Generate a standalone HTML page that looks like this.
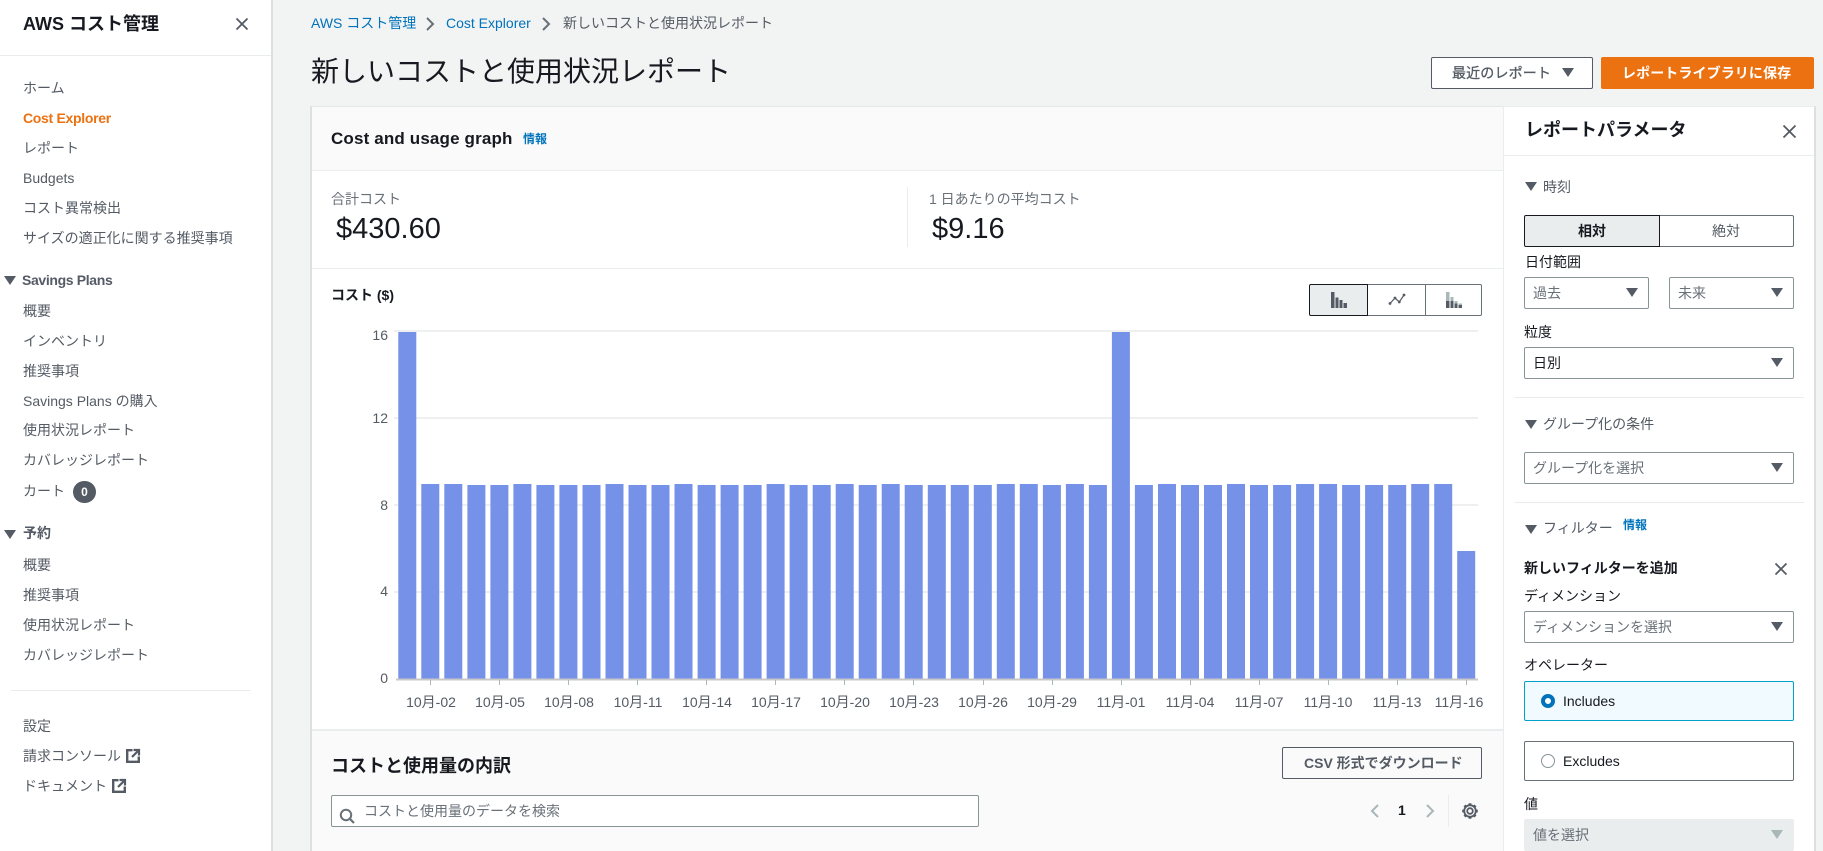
<!DOCTYPE html>
<html lang="ja"><head><meta charset="utf-8"><title>AWS コスト管理</title>
<style>
html,body{margin:0;padding:0;width:1823px;height:851px;overflow:hidden;background:#f2f3f3}
body{position:relative;font-family:"Liberation Sans","Noto Sans CJK JP",sans-serif;font-size:14px;color:#16191f}
.t{position:absolute;line-height:20px;white-space:nowrap}
.n{color:#545b64}.b{font-weight:700}.l{color:#0073bb}.g{color:#687078}
.box{position:absolute;box-sizing:border-box}
.sel{position:absolute;box-sizing:border-box;background:#fff;border:1px solid #879596;border-radius:2px;height:32px}
.tri{position:absolute;width:0;height:0;border-left:6px solid transparent;border-right:6px solid transparent;border-top:9px solid #545b64}
.hr{position:absolute;height:1px;background:#eaeded}
svg{position:absolute;overflow:visible}
</style></head><body>

<!-- sidebar -->
<div class="box" style="left:0;top:0;width:273px;height:851px;background:#fff;border-right:2px solid #dce0e0"></div>
<div class="t b" style="left:23px;top:14px;font-size:18px">AWS コスト管理</div>
<svg style="left:236px;top:18px" width="12" height="12" viewBox="0 0 12 12"><path d="M.5.5l11 11M11.500.5l-11 11" stroke="#545b64" stroke-width="1.800" fill="none"/></svg>
<div class="hr" style="left:0;top:55px;width:271px"></div>
<div class="t n" style="left:23px;top:78px">ホーム</div>
<div class="t b" style="left:23px;top:108px;color:#ec7211;letter-spacing:-.3px">Cost Explorer</div>
<div class="t n" style="left:23px;top:138px">レポート</div>
<div class="t n" style="left:23px;top:168px">Budgets</div>
<div class="t n" style="left:23px;top:198px">コスト異常検出</div>
<div class="t n" style="left:23px;top:228px">サイズの適正化に関する推奨事項</div>
<div class="tri" style="left:4px;top:276px"></div>
<div class="t n b" style="left:22px;top:270px;letter-spacing:-.35px">Savings Plans</div>
<div class="t n" style="left:23px;top:301px">概要</div>
<div class="t n" style="left:23px;top:331px">インベントリ</div>
<div class="t n" style="left:23px;top:361px">推奨事項</div>
<div class="t n" style="left:23px;top:391px">Savings Plans の購入</div>
<div class="t n" style="left:23px;top:420px">使用状況レポート</div>
<div class="t n" style="left:23px;top:450px">カバレッジレポート</div>
<div class="t n" style="left:23px;top:481px">カート</div>
<div class="box" style="left:73px;top:481px;width:23px;height:22px;border-radius:11px;background:#545b64;color:#fff;text-align:center;font-size:12px;font-weight:700;line-height:22px">0</div>
<div class="tri" style="left:4px;top:530px"></div>
<div class="t n b" style="left:23px;top:523px">予約</div>
<div class="t n" style="left:23px;top:555px">概要</div>
<div class="t n" style="left:23px;top:585px">推奨事項</div>
<div class="t n" style="left:23px;top:615px">使用状況レポート</div>
<div class="t n" style="left:23px;top:645px">カバレッジレポート</div>
<div class="hr" style="left:11px;top:690px;width:240px"></div>
<div class="t n" style="left:23px;top:716px">設定</div>
<div class="t n" style="left:23px;top:746px">請求コンソール</div>
<svg style="left:126px;top:749px" width="14" height="14" viewBox="0 0 14 14"><path d="M6.500 1.200H1.200v11.600h11.600V7.500" stroke="#545b64" stroke-width="2.400" fill="none"/><path d="M7.500 1h5.500v5.500" stroke="#545b64" stroke-width="2.200" fill="none"/><path d="M12.500 1.500L6 8" stroke="#545b64" stroke-width="2.200" fill="none"/></svg>
<div class="t n" style="left:23px;top:776px">ドキュメント</div>
<svg style="left:112px;top:779px" width="14" height="14" viewBox="0 0 14 14"><path d="M6.500 1.200H1.200v11.600h11.600V7.500" stroke="#545b64" stroke-width="2.400" fill="none"/><path d="M7.500 1h5.500v5.500" stroke="#545b64" stroke-width="2.200" fill="none"/><path d="M12.500 1.500L6 8" stroke="#545b64" stroke-width="2.200" fill="none"/></svg>

<!-- header -->
<div class="t l" style="left:311px;top:13px">AWS コスト管理</div>
<svg style="left:426px;top:17px" width="9" height="14" viewBox="0 0 9 14"><path d="M1 1l6 6-6 6" stroke="#687078" stroke-width="2" fill="none"/></svg>
<div class="t l" style="left:446px;top:13px">Cost Explorer</div>
<svg style="left:542px;top:17px" width="9" height="14" viewBox="0 0 9 14"><path d="M1 1l6 6-6 6" stroke="#687078" stroke-width="2" fill="none"/></svg>
<div class="t n" style="left:563px;top:13px">新しいコストと使用状況レポート</div>
<div class="t" style="left:311px;top:52px;font-size:28px;line-height:40px">新しいコストと使用状況レポート</div>
<div class="box" style="left:1431px;top:57px;width:162px;height:32px;background:#fff;border:1px solid #545b64;border-radius:2px"></div>
<div class="t n" style="left:1452px;top:63px;-webkit-text-stroke:.3px #545b64;letter-spacing:.15px">最近のレポート</div>
<div class="tri" style="left:1562px;top:68px"></div>
<div class="box" style="left:1601px;top:57px;width:213px;height:32px;background:#ec7211;border-radius:2px"></div>
<div class="t b" style="left:1622px;top:63px;color:#fff;letter-spacing:.1px">レポートライブラリに保存</div>

<!-- main panel -->
<div class="box" style="left:310px;top:106px;width:1194px;height:745px;background:#fff;border-left:2px solid #dce0e0;border-top:1px solid #e4e7e7"></div>
<div class="box" style="left:312px;top:107px;width:1191px;height:64px;background:#fafafa;border-bottom:1px solid #eaeded"></div>
<div class="t b" style="left:331px;top:129px;font-size:17px;letter-spacing:.15px">Cost and usage graph</div>
<div class="t b l" style="left:523px;top:129px;font-size:12px">情報</div>
<div class="t g" style="left:331px;top:189px">合計コスト</div>
<div class="t" style="left:336px;top:209px;font-size:29px;line-height:40px">$430.60</div>
<div class="box" style="left:907px;top:187px;width:1px;height:60px;background:#eaeded"></div>
<div class="t g" style="left:929px;top:189px">1 日あたりの平均コスト</div>
<div class="t" style="left:932px;top:209px;font-size:29px;line-height:40px">$9.16</div>
<div class="hr" style="left:312px;top:268px;width:1191px"></div>
<div class="t b" style="left:331px;top:285px">コスト ($)</div>

<!-- chart toggle -->
<div class="box" style="left:1367px;top:284px;width:115px;height:32px;background:#fff;border:1px solid #687078;border-radius:0 2px 2px 0"></div>
<div class="box" style="left:1425px;top:284px;width:1px;height:32px;background:#687078"></div>
<div class="box" style="left:1309px;top:284px;width:59px;height:32px;background:#eaeded;border:1px solid #16191f;border-radius:2px 0 0 2px"></div>
<svg style="left:1331px;top:292px" width="16" height="16" viewBox="0 0 16 16" fill="#545b64"><rect x="0" y="0" width="3.500" height="16"/><rect x="4.500" y="5.500" width="3" height="10.500"/><rect x="8.500" y="8" width="3" height="8"/><rect x="12.500" y="11" width="3.500" height="5"/></svg>
<svg style="left:1389px;top:294px" width="16" height="11" viewBox="0 0 16 11"><path d="M1 9.500L6 4l4.300 4L15 1" stroke="#545b64" stroke-width="1.200" fill="none"/><g fill="#545b64"><circle cx="1" cy="9.500" r="1.400"/><circle cx="6" cy="4" r="1.400"/><circle cx="10.300" cy="8" r="1.400"/><circle cx="15" cy="1" r="1.400"/></g></svg>
<svg style="left:1446px;top:292px" width="16" height="16" viewBox="0 0 16 16"><g fill="#aab7b8"><rect x="0" y="0" width="3.500" height="9"/><rect x="4.500" y="5" width="3" height="4"/><rect x="8.500" y="9" width="3" height="2.500"/><rect x="12.500" y="11.500" width="3.500" height="1.500"/></g><g fill="#545b64"><rect x="0" y="9" width="3.500" height="7"/><rect x="4.500" y="9" width="3" height="7"/><rect x="8.500" y="11.500" width="3" height="4.500"/><rect x="12.500" y="13" width="3.500" height="3"/></g></svg>

<!-- chart -->
<svg style="left:0;top:0" width="1823" height="851" viewBox="0 0 1823 851">
<g fill="#eef0f0"><rect x="394" y="330" width="1084" height="2"/><rect x="394" y="417" width="1084" height="2"/><rect x="394" y="504" width="1084" height="2"/><rect x="394" y="591" width="1084" height="2"/></g>
<g fill="#7692e8">
<rect x="398.300" y="332" width="18" height="347"/><rect x="421.300" y="484" width="18" height="195"/><rect x="444.300" y="484" width="18" height="195"/><rect x="467.400" y="485" width="18" height="194"/><rect x="490.400" y="485" width="18" height="194"/><rect x="513.400" y="484" width="18" height="195"/><rect x="536.400" y="485" width="18" height="194"/><rect x="559.400" y="485" width="18" height="194"/><rect x="582.500" y="485" width="18" height="194"/><rect x="605.500" y="484" width="18" height="195"/><rect x="628.500" y="485" width="18" height="194"/><rect x="651.500" y="485" width="18" height="194"/><rect x="674.500" y="484" width="18" height="195"/><rect x="697.600" y="485" width="18" height="194"/><rect x="720.600" y="485" width="18" height="194"/><rect x="743.600" y="485" width="18" height="194"/><rect x="766.600" y="484" width="18" height="195"/><rect x="789.600" y="485" width="18" height="194"/><rect x="812.700" y="485" width="18" height="194"/><rect x="835.700" y="484" width="18" height="195"/><rect x="858.700" y="485" width="18" height="194"/><rect x="881.700" y="484" width="18" height="195"/><rect x="904.700" y="485" width="18" height="194"/><rect x="927.800" y="485" width="18" height="194"/><rect x="950.800" y="485" width="18" height="194"/><rect x="973.800" y="485" width="18" height="194"/><rect x="996.800" y="484" width="18" height="195"/><rect x="1019.800" y="484" width="18" height="195"/><rect x="1042.900" y="485" width="18" height="194"/><rect x="1065.900" y="484" width="18" height="195"/><rect x="1088.900" y="485" width="18" height="194"/><rect x="1111.900" y="332" width="18" height="347"/><rect x="1134.900" y="485" width="18" height="194"/><rect x="1158" y="484" width="18" height="195"/><rect x="1181" y="485" width="18" height="194"/><rect x="1204" y="485" width="18" height="194"/><rect x="1227" y="484" width="18" height="195"/><rect x="1250" y="485" width="18" height="194"/><rect x="1273.100" y="485" width="18" height="194"/><rect x="1296.100" y="484" width="18" height="195"/><rect x="1319.100" y="484" width="18" height="195"/><rect x="1342.100" y="485" width="18" height="194"/><rect x="1365.100" y="485" width="18" height="194"/><rect x="1388.200" y="485" width="18" height="194"/><rect x="1411.200" y="484" width="18" height="195"/><rect x="1434.200" y="484" width="18" height="195"/><rect x="1457.200" y="551" width="18" height="128"/>
</g>
<rect x="396" y="678.500" width="1082" height="2" fill="#c8c8c8"/>
<path stroke="#aab7b8" fill="none" d="M430.500 680v5M499.500 680v5M568.500 680v5M637.500 680v5M706.500 680v5M775.500 680v5M844.500 680v5M913.500 680v5M983.500 680v5M1052.500 680v5M1121.500 680v5M1190.500 680v5M1259.500 680v5M1328.500 680v5M1397.500 680v5M1466.500 680v5"/>
<g font-family="'Liberation Sans','Noto Sans CJK JP',sans-serif" font-size="14" fill="#545b64">
<g text-anchor="end"><text x="388" y="340">16</text><text x="388" y="423">12</text><text x="388" y="510">8</text><text x="388" y="596">4</text><text x="388" y="683">0</text></g>
<g text-anchor="middle"><text x="431" y="707">10月-02</text><text x="500" y="707">10月-05</text><text x="569" y="707">10月-08</text><text x="638" y="707">10月-11</text><text x="707" y="707">10月-14</text><text x="776" y="707">10月-17</text><text x="845" y="707">10月-20</text><text x="914" y="707">10月-23</text><text x="983" y="707">10月-26</text><text x="1052" y="707">10月-29</text><text x="1121" y="707">11月-01</text><text x="1190" y="707">11月-04</text><text x="1259" y="707">11月-07</text><text x="1328" y="707">11月-10</text><text x="1397" y="707">11月-13</text><text x="1459" y="707">11月-16</text></g>
</g>
</svg>

<!-- breakdown -->
<div class="box" style="left:312px;top:729px;width:1191px;height:122px;background:#fafafa;border-top:2px solid #eaeded"></div>
<div class="t b" style="left:331px;top:756px;font-size:18px">コストと使用量の内訳</div>
<div class="box" style="left:1282px;top:747px;width:200px;height:32px;background:#fff0;border:1px solid #545b64;border-radius:2px"></div>
<div class="t n b" style="left:1304px;top:753px">CSV 形式でダウンロード</div>
<div class="sel" style="left:331px;top:795px;width:648px"></div>
<svg style="left:339px;top:808px" width="16" height="16" viewBox="0 0 16 16"><circle cx="7" cy="7" r="5.200" stroke="#687078" stroke-width="2" fill="none"/><path d="M11 11l4 4" stroke="#687078" stroke-width="2.200"/></svg>
<div class="t g" style="left:364px;top:801px">コストと使用量のデータを検索</div>
<svg style="left:1370px;top:804px" width="9" height="14" viewBox="0 0 9 14"><path d="M8 1L2 7l6 6" stroke="#aab7b8" stroke-width="2" fill="none"/></svg>
<div class="t b" style="left:1398px;top:800px">1</div>
<svg style="left:1426px;top:804px" width="9" height="14" viewBox="0 0 9 14"><path d="M1 1l6 6-6 6" stroke="#aab7b8" stroke-width="2" fill="none"/></svg>
<div class="box" style="left:1448px;top:795px;width:1px;height:32px;background:#eaeded"></div>
<svg style="left:1462px;top:803px" width="16" height="16" viewBox="0 0 16 16"><circle cx="8" cy="8" r="2.800" stroke="#545b64" stroke-width="1.800" fill="none"/><circle cx="8" cy="8" r="5.800" stroke="#545b64" stroke-width="1.800" fill="none"/><path d="M8 .2v2.500M8 13.300v2.500M.2 8h2.500M13.300 8h2.500M2.500 2.500l1.800 1.800M11.700 11.700l1.800 1.800M13.500 2.500l-1.800 1.800M4.300 11.700l-1.800 1.800" stroke="#545b64" stroke-width="2.800"/></svg>

<!-- right panel -->
<div class="box" style="left:1503px;top:106px;width:313px;height:745px;background:#fff;border-left:1px solid #eaeded;border-right:2px solid #dce0e0;border-top:1px solid #eaeded"></div>
<div class="t b" style="left:1525px;top:120px;font-size:18px">レポートパラメータ</div>
<svg style="left:1783px;top:125px" width="13" height="13" viewBox="0 0 13 13"><path d="M.5.5l12 12M12.500.5l-12 12" stroke="#545b64" stroke-width="1.800" fill="none"/></svg>
<div class="hr" style="left:1504px;top:155px;width:310px"></div>
<div class="tri" style="left:1525px;top:182px"></div>
<div class="t n" style="left:1543px;top:177px">時刻</div>
<div class="box" style="left:1658px;top:215px;width:136px;height:32px;background:#fff;border:1px solid #687078;border-radius:0 2px 2px 0;text-align:center;line-height:30px;color:#545b64">絶対</div>
<div class="box" style="left:1524px;top:215px;width:136px;height:32px;background:#eaeded;border:1px solid #16191f;border-radius:2px 0 0 2px;text-align:center;line-height:30px;font-weight:700">相対</div>
<div class="t" style="left:1525px;top:252px">日付範囲</div>
<div class="sel" style="left:1524px;top:277px;width:125px"></div>
<div class="t g" style="left:1533px;top:283px">過去</div>
<div class="tri" style="left:1626px;top:288px"></div>
<div class="sel" style="left:1669px;top:277px;width:125px"></div>
<div class="t g" style="left:1678px;top:283px">未来</div>
<div class="tri" style="left:1771px;top:288px"></div>
<div class="t" style="left:1524px;top:322px">粒度</div>
<div class="sel" style="left:1524px;top:347px;width:270px"></div>
<div class="t" style="left:1533px;top:353px">日別</div>
<div class="tri" style="left:1771px;top:358px"></div>
<div class="hr" style="left:1514px;top:397px;width:290px"></div>
<div class="tri" style="left:1525px;top:420px"></div>
<div class="t n" style="left:1543px;top:414px">グループ化の条件</div>
<div class="sel" style="left:1524px;top:452px;width:270px"></div>
<div class="t g" style="left:1533px;top:458px">グループ化を選択</div>
<div class="tri" style="left:1771px;top:463px"></div>
<div class="hr" style="left:1514px;top:502px;width:290px"></div>
<div class="tri" style="left:1525px;top:525px"></div>
<div class="t n" style="left:1543px;top:518px">フィルター</div>
<div class="t b l" style="left:1623px;top:515px;font-size:12px">情報</div>
<div class="t b" style="left:1524px;top:558px">新しいフィルターを追加</div>
<svg style="left:1775px;top:563px" width="12" height="12" viewBox="0 0 12 12"><path d="M.5.5l11 11M11.500.5l-11 11" stroke="#545b64" stroke-width="1.800" fill="none"/></svg>
<div class="t" style="left:1524px;top:586px">ディメンション</div>
<div class="sel" style="left:1524px;top:611px;width:270px"></div>
<div class="t g" style="left:1533px;top:617px">ディメンションを選択</div>
<div class="tri" style="left:1771px;top:622px"></div>
<div class="t" style="left:1524px;top:655px">オペレーター</div>
<div class="box" style="left:1524px;top:681px;width:270px;height:40px;background:#f1faff;border:1px solid #00a1c9;border-radius:2px"></div>
<div class="box" style="left:1541px;top:694px;width:14px;height:14px;border-radius:50%;border:4px solid #0073bb;background:#fff"></div>
<div class="t" style="left:1563px;top:691px;color:#16191f">Includes</div>
<div class="box" style="left:1524px;top:741px;width:270px;height:40px;background:#fff;border:1px solid #687078;border-radius:2px"></div>
<div class="box" style="left:1541px;top:754px;width:14px;height:14px;border-radius:50%;border:1px solid #879596;background:#fff"></div>
<div class="t" style="left:1563px;top:751px">Excludes</div>
<div class="t" style="left:1524px;top:794px">値</div>
<div class="box" style="left:1524px;top:819px;width:270px;height:32px;background:#eaeded;border-radius:2px"></div>
<div class="t g" style="left:1533px;top:825px">値を選択</div>
<div class="tri" style="left:1771px;top:830px;border-top-color:#aab7b8"></div>
</body></html>
